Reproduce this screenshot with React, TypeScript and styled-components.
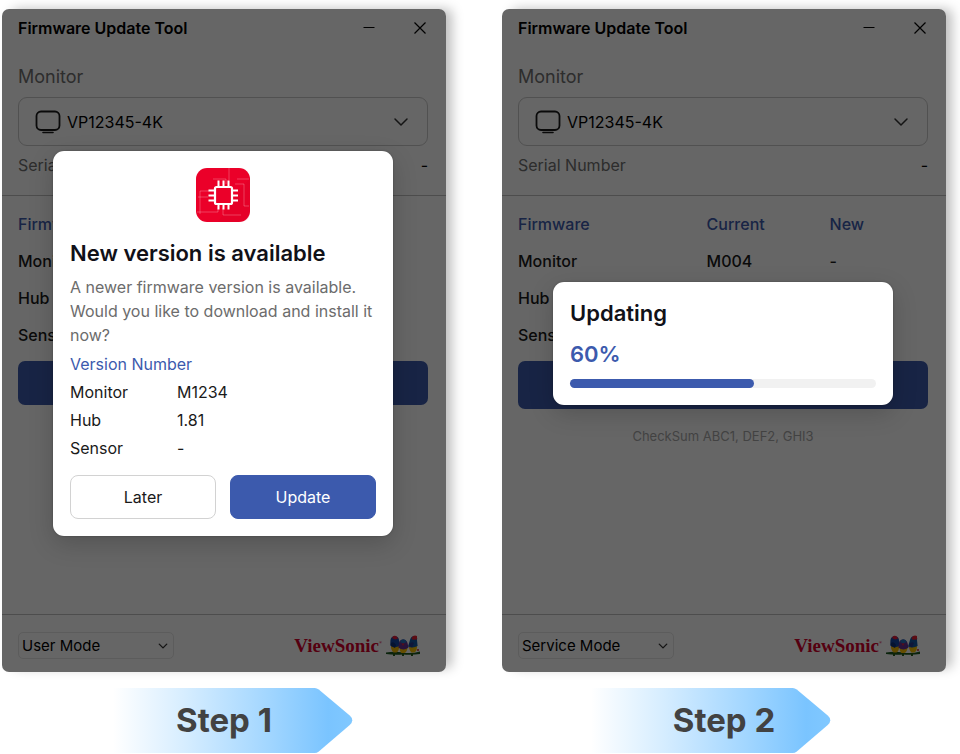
import React from "react";
import styled, { createGlobalStyle } from "styled-components";

const GlobalStyle = createGlobalStyle`
  *, *::before, *::after { box-sizing: border-box; }
  body { margin: 0; background: #fff; font-family: Inter, "Liberation Sans", sans-serif; color: #000; }
  button, select { font: inherit; color: inherit; }
`;

const blue = "#3c5aad";

const Page = styled.main`
  display: grid;
  grid-template-columns: 1fr 1fr;
  gap: 56px;
  min-height: 100vh;
  padding: 9px 14px 1px 2px;
`;

const Column = styled.section`
  display: flex;
  flex-direction: column;
  gap: 16px;
  min-width: 0;
`;

const Window = styled.div`
  position: relative;
  display: flex;
  flex: 1;
  flex-direction: column;
  border-radius: 7px;
  background: #fff;
  box-shadow: 8px -2px 12px -2px rgba(0, 0, 0, 0.26);
`;

const TitleBar = styled.header`
  display: flex;
  align-items: center;
  height: 38px;
  padding: 0 16px;
`;

const AppTitle = styled.h1`
  flex: 1;
  margin: 0;
  font-size: 16px;
  font-weight: 600;
`;

const WindowButton = styled.button`
  display: flex;
  align-items: center;
  justify-content: center;
  width: 20px;
  height: 20px;
  margin-left: 31px;
  padding: 0;
  border: 0;
  background: none;
`;

const MonitorPanel = styled.div`
  display: flex;
  flex-direction: column;
  padding: 18px 18px 18px 16px;
  border-bottom: 1px solid #c0c0c0;
`;

const FieldLabel = styled.label`
  margin-bottom: 8px;
  color: #707070;
  font-size: 18px;
  line-height: 24px;
`;

const MonitorField = styled.div`
  display: flex;
  align-items: center;
  gap: 6px;
  height: 49px;
  padding: 0 18px 0 16px;
  border: 1px solid #cacaca;
  border-radius: 9px;
`;

const PlainSelect = styled.select<{ $size: number }>`
  flex: 1;
  min-width: 0;
  padding: 0;
  border: 0;
  outline: 0;
  appearance: none;
  background: none;
  font-size: ${(p) => p.$size}px;
`;

const SerialRow = styled.div`
  display: flex;
  justify-content: space-between;
  margin-top: 7px;
  font-size: 16px;
  line-height: 24px;
`;

const Muted = styled.span`
  color: #707070;
`;

const FirmwarePanel = styled.div`
  display: flex;
  flex: 1;
  flex-direction: column;
  padding: 9px 18px 16px 16px;
`;

const FirmwareTable = styled.table`
  width: 100%;
  margin-bottom: 8px;
  border-collapse: collapse;
  table-layout: fixed;
  color: #1a1a1a;
  font-size: 16px;

  th, td { height: 37px; padding: 0; text-align: left; font-weight: 500; }
  thead th { color: ${blue}; }
  th:first-child { width: 46%; }
  th:nth-child(2) { width: 30%; }
`;

const InstallButton = styled.button<{ $tall: boolean }>`
  height: ${(p) => (p.$tall ? 48 : 44)}px;
  border: 0;
  border-radius: 7px;
  background: ${blue};
`;

const Checksum = styled.p`
  margin: 18px 0 0;
  color: #a8a8a8;
  font-size: 13px;
  line-height: 18px;
  text-align: center;
`;

const Footer = styled.footer`
  display: flex;
  align-items: center;
  justify-content: space-between;
  height: 58px;
  padding: 4px 25px 0 16px;
  border-top: 1px solid #c0c0c0;
`;

const ModeField = styled.div`
  display: flex;
  align-items: center;
  width: 156px;
  height: 27px;
  padding: 0 5px 0 3px;
  border: 1px solid #e6e6e6;
  border-radius: 5px;
`;

const Brand = styled.div`
  display: flex;
  align-items: center;
  gap: 3px;
  color: #d5002c;
  font-family: "Liberation Serif", serif;
  font-size: 19px;
  font-weight: 700;

  sup { font-size: 4px; vertical-align: 8px; line-height: 0; }
`;

const Overlay = styled.div`
  position: absolute;
  inset: 0;
  display: flex;
  align-items: center;
  justify-content: center;
  padding: 6px 53px 0 51px;
  border-radius: 7px;
  background: rgba(0, 0, 0, 0.6);
`;

const Dialog = styled.div`
  display: flex;
  flex: 1;
  flex-direction: column;
  padding: 17px;
  border-radius: 11px;
  background: #fff;
  box-shadow: 0 8px 24px rgba(0, 0, 0, 0.18), 0 0 2px rgba(0, 0, 0, 0.3);
`;

const AppIcon = styled.svg`
  align-self: center;
  margin-bottom: 17px;
`;

const DialogTitle = styled.h2`
  margin: 0;
  color: #111118;
  font-size: 22px;
  font-weight: 600;
  line-height: 28px;
`;

const DialogText = styled.p`
  margin: 8px 0 3px;
  color: #6c6c6c;
  font-size: 16px;
  line-height: 24px;
`;

const VersionTable = styled.table`
  border-collapse: collapse;
  color: #1a1a1a;
  font-size: 16px;
  line-height: 28px;
  text-align: left;

  caption { color: ${blue}; text-align: left; }
  th, td { padding: 0; font-weight: 400; }
  th { width: 107px; }
`;

const Actions = styled.div`
  display: grid;
  grid-template-columns: 1fr 1fr;
  gap: 14px;
  margin-top: 13px;
`;

const ActionButton = styled.button<{ $primary?: boolean }>`
  height: 44px;
  padding: 0;
  border: 1px solid ${(p) => (p.$primary ? blue : "#d2d2d2")};
  border-radius: 8px;
  background: ${(p) => (p.$primary ? blue : "#fff")};
  color: ${(p) => (p.$primary ? "#fff" : "#1a1a1a")};
  font-size: 16px;
`;

const Percent = styled.div`
  margin: 13px 0 11px;
  color: ${blue};
  font-size: 22px;
  font-weight: 600;
  line-height: 28px;
`;

const ProgressBar = styled.div`
  height: 9px;
  border-radius: 5px;
  background: #f1f1f1;
`;

const ProgressFill = styled.div`
  height: 100%;
  border-radius: 5px;
  background: ${blue};
`;

const Step = styled.div`
  display: grid;
  align-items: center;
`;

const StepArrow = styled.svg<{ $start: number }>`
  grid-area: 1 / 1;
  width: 54%;
  margin-left: ${(p) => p.$start}%;
`;

const StepName = styled.p`
  z-index: 1;
  grid-area: 1 / 1;
  margin: 0;
  padding-bottom: 2px;
  color: #424242;
  font-size: 33px;
  font-weight: 700;
  line-height: 40px;
  text-align: center;
`;

function Chevron({ size }: { size: number }) {
  return (
    <svg width={size} height={size} viewBox="0 0 16 16" fill="none" stroke="#333" strokeWidth={size > 12 ? 1.5 : 2.2} strokeLinecap="round" strokeLinejoin="round" aria-hidden="true">
      <path d="M2 5 8 11l6-6" />
    </svg>
  );
}

function MonitorIcon() {
  return (
    <svg width="26" height="24" viewBox="0 0 26 24" fill="none" stroke="#1a1a1a" strokeWidth="1.800" strokeLinecap="round" aria-hidden="true">
      <rect x="1.500" y="1.500" width="23" height="18.500" rx="4.500" />
      <path d="M8 22.500h10" strokeWidth="1.600" />
    </svg>
  );
}

function Birds() {
  return (
    <svg width="36" height="22" viewBox="0 0 36 22" aria-hidden="true">
      <path d="M1 17.500q9-1.500 17 0t17-1v2.500q-8 1.200-17 .5-9 .8-17-.5z" fill="#1d5a22" />
      <path d="M8 18h2v3H8zM17 18h2v3h-2zM26 18h2v3h-2z" fill="#275c18" />
      <path d="M6 10h8q.5 6-2.500 7.500h-3Q5.500 15 6 10z" fill="#f4b800" />
      <path d="M5.500 5Q6 1 10 1.200T14 5.500l.8 5Q10 14 5.200 10.500z" fill="#1748a6" />
      <path d="M7 3Q8 .2 10.200.8T13 3.500L10 4.500z" fill="#e31937" />
      <path d="M6 8q3-2 5 2l-1 3-4-2z" fill="#123078" />
      <path d="M14.500 13h8q-.5 4-3 5h-3q-2-1.500-2-5z" fill="#ffc400" />
      <path d="M14 8q.5-3.500 4-3.500T22.500 8l1 4.500q-5 4-10.200 0z" fill="#67308f" />
      <path d="M15 7q1-3 3.500-2.700T21.800 7l-3.500 1.500z" fill="#2474bb" />
      <path d="M16.500 8.500h3L18 11z" fill="#dd2438" />
      <path d="M24 10l8-.5q.5 6-2.500 8h-3Q23.500 15 24 10z" fill="#f8c100" />
      <path d="M25 5q1-4 4.500-4T32 5l.6 6Q28 13.500 23 11.500z" fill="#1457a5" />
      <path d="M26.500 3Q28.500-.5 32 1v3.500l-4.500.3z" fill="#e31e30" />
      <path d="M24 10q2-4 5-2l-2 4.500z" fill="#26388c" />
      <circle cx="33" cy="15" r="1" fill="#c6283c" />
    </svg>
  );
}

function FirmwareIcon() {
  return (
    <AppIcon width="54" height="54" viewBox="0 0 54 54" fill="none" role="img" aria-label="Firmware">
      <rect width="54" height="54" rx="11" fill="#eb0029" />
      <path d="M54 10v33q0 11-11 11H22L45 20z" fill="#c80028" opacity=".16" />
      <path d="M4 46V23h9M1 44h21V38M33 0v12M17 11h13v5M39 16h9v22h5M41 11h12M27 40v7h18M2 29h10" stroke="#fff" strokeWidth=".7" opacity=".35" />
      <rect x="19" y="19" width="17" height="17" rx="1.500" fill="#eb0029" stroke="#fff" strokeWidth="2.200" />
      <path d="M22.500 18v-5.500M27.500 18v-5.500M32.500 18v-5.500M22.500 37v4.500M27.500 37v4.500M32.500 37v4.500M18 22.500h-5.500M18 27.500h-5.500M18 32.500h-5.500M37 22.500h5M37 27.500h5M37 32.500h5" stroke="#fff" strokeWidth="2" />
    </AppIcon>
  );
}

interface ToolWindowProps {
  id: string;
  mode: string;
  checksum?: string;
  children: React.ReactNode;
}

function ToolWindow({ id, mode, checksum, children }: ToolWindowProps) {
  return (
    <Window>
      <TitleBar>
        <AppTitle>Firmware Update Tool</AppTitle>
        <WindowButton aria-label="Minimize">
          <svg width="12" height="12" viewBox="0 0 12 12" stroke="#000"><path d="M.5 5.500h11" /></svg>
        </WindowButton>
        <WindowButton aria-label="Close">
          <svg width="12" height="12" viewBox="0 0 12 12" stroke="#000" strokeWidth="1.200"><path d="M.5.5l11 11M11.500.5l-11 11" /></svg>
        </WindowButton>
      </TitleBar>
      <MonitorPanel>
        <FieldLabel htmlFor={`${id}-monitor`}>Monitor</FieldLabel>
        <MonitorField>
          <MonitorIcon />
          <PlainSelect id={`${id}-monitor`} $size={16}>
            <option>VP12345-4K</option>
          </PlainSelect>
          <Chevron size={16} />
        </MonitorField>
        <SerialRow>
          <Muted>Serial Number</Muted>
          <span>-</span>
        </SerialRow>
      </MonitorPanel>
      <FirmwarePanel>
        <FirmwareTable>
          <thead>
            <tr><th>Firmware</th><th>Current</th><th>New</th></tr>
          </thead>
          <tbody>
            <tr><td>Monitor</td><td>M004</td><td>-</td></tr>
            <tr><td>Hub</td><td /><td /></tr>
            <tr><td>Sensor</td><td /><td /></tr>
          </tbody>
        </FirmwareTable>
        <InstallButton $tall={Boolean(checksum)} aria-label="Update" />
        {checksum && <Checksum>{checksum}</Checksum>}
      </FirmwarePanel>
      <Footer>
        <ModeField>
          <PlainSelect aria-label="Mode" $size={15}>
            <option>{mode}</option>
          </PlainSelect>
          <Chevron size={10} />
        </ModeField>
        <Brand>
          <span>ViewSonic<sup>®</sup></span>
          <Birds />
        </Brand>
      </Footer>
      <Overlay>{children}</Overlay>
    </Window>
  );
}

function StepBanner({ name, start }: { name: string; start: number }) {
  const fill = name.replace(" ", "-").toLowerCase();
  return (
    <Step>
      <StepArrow $start={start} height="65" viewBox="0 0 240 65" aria-hidden="true">
        <defs>
          <linearGradient id={fill}>
            <stop offset="0" stopColor="#fff" />
            <stop offset=".3" stopColor="#d6edff" />
            <stop offset=".65" stopColor="#a2d6ff" />
            <stop offset=".9" stopColor="#7ac4ff" />
            <stop offset="1" stopColor="#80c8ff" />
          </linearGradient>
        </defs>
        <path d="M0 0H202Q204 0 206 1.500L237 27.500Q242 32 237 37L206 63.500Q204 65 202 65H0z" fill={`url(#${fill})`} />
      </StepArrow>
      <StepName>{name}</StepName>
    </Step>
  );
}

export default function App() {
  const progress = 60;
  return (
    <>
      <GlobalStyle />
      <Page>
        <Column>
          <ToolWindow id="first" mode="User Mode">
            <Dialog role="dialog" aria-label="New version is available">
              <FirmwareIcon />
              <DialogTitle>New version is available</DialogTitle>
              <DialogText>
                A newer firmware version is available. Would you like to download and install it now?
              </DialogText>
              <VersionTable>
                <caption>Version Number</caption>
                <tbody>
                  <tr><th scope="row">Monitor</th><td>M1234</td></tr>
                  <tr><th scope="row">Hub</th><td>1.81</td></tr>
                  <tr><th scope="row">Sensor</th><td>-</td></tr>
                </tbody>
              </VersionTable>
              <Actions>
                <ActionButton>Later</ActionButton>
                <ActionButton $primary>Update</ActionButton>
              </Actions>
            </Dialog>
          </ToolWindow>
          <StepBanner name="Step 1" start={25} />
        </Column>
        <Column>
          <ToolWindow id="second" mode="Service Mode" checksum="CheckSum ABC1, DEF2, GHI3">
            <Dialog role="dialog" aria-label="Updating">
              <DialogTitle>Updating</DialogTitle>
              <Percent>{progress}%</Percent>
              <ProgressBar role="progressbar" aria-label="Update progress" aria-valuenow={progress} aria-valuemin={0} aria-valuemax={100}>
                <ProgressFill style={{ width: `${progress}%` }} />
              </ProgressBar>
            </Dialog>
          </ToolWindow>
          <StepBanner name="Step 2" start={20} />
        </Column>
      </Page>
    </>
  );
}
